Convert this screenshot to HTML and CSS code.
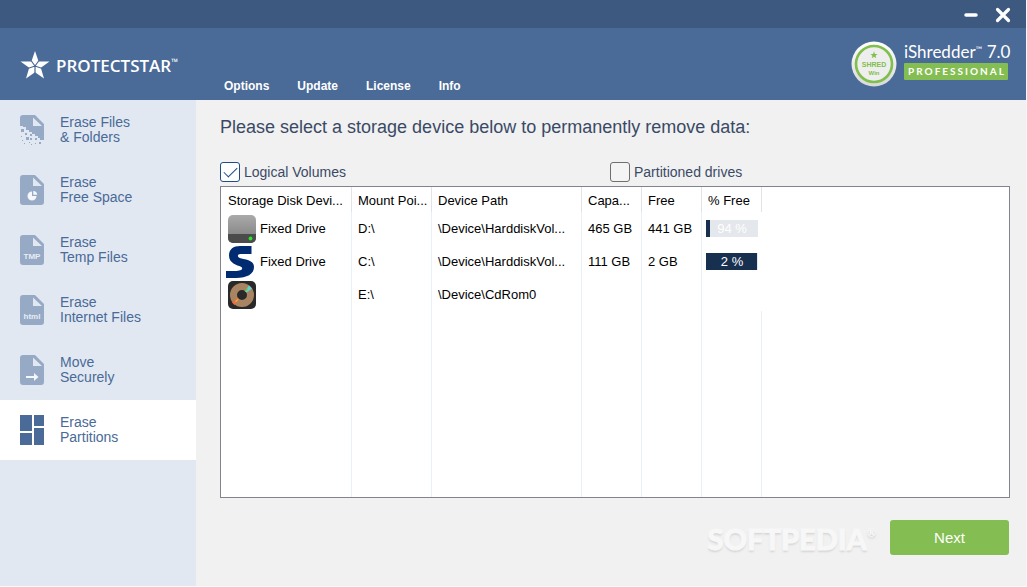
FILE: index.html
```
<!DOCTYPE html>
<html lang="en">
<head>
<meta charset="utf-8">
<title>iShredder 7.0 Professional</title>
<link rel="stylesheet" href="styles.css">
</head>
<body>
<svg class="defs" aria-hidden="true">
  <symbol id="file" viewBox="0 0 24 30">
    <path fill="#96a9c5" d="M3 0H15L24 9V27a3 3 0 0 1-3 3H3a3 3 0 0 1-3-3V3a3 3 0 0 1 3-3z"/>
    <path fill="#e1e8f2" d="M13 2.500V11H22z"/>
  </symbol>
</svg>
<div class="app">
  <div class="titlebar">
    <button class="win-btn" type="button" aria-label="Minimize"><svg width="16" height="16" viewBox="0 0 16 16"><path d="M3 8H13" stroke="#fff" stroke-width="3.500" stroke-linecap="round"/></svg></button>
    <button class="win-btn" type="button" aria-label="Close"><svg width="16" height="16" viewBox="0 0 16 16"><path d="M2.500 2.500L13.500 13.500M13.500 2.500L2.500 13.500" stroke="#fff" stroke-width="3.200" stroke-linecap="round"/></svg></button>
  </div>
  <header class="header">
    <div class="brand">
      <svg width="30" height="30" viewBox="0 0 30 30"><path fill="#fff" d="M15 1L18.600 11.400H29.500L20.800 17.800L24 28.500L15 22.200L6 28.500L9.200 17.800L.5 11.400H11.400z"/><path stroke="#4a6a97" stroke-width="1.200" d="M15 16L11 10.500M15 16L19 10.500M15 16L21.500 18.200M15 16V23M15 16L8.500 18.200"/></svg>
      <span class="brand-name">PROTECTSTAR<small>™</small></span>
    </div>
    <nav class="menu">
      <a href="#options">Options</a>
      <a href="#update">Update</a>
      <a href="#license">License</a>
      <a href="#info">Info</a>
    </nav>
    <div class="product">
      <svg width="46" height="46" viewBox="0 0 46 46">
        <defs><linearGradient id="badge" x1="0" y1="0" x2="0" y2="1"><stop offset="0" stop-color="#fff"/><stop offset="1" stop-color="#d8d8d8"/></linearGradient></defs>
        <circle cx="23" cy="23" r="22.500" fill="url(#badge)"/>
        <circle cx="23" cy="23" r="18" fill="#eee" stroke="#7fbf4b" stroke-width="2.600"/>
        <path fill="#7fbf4b" d="M23 10.300L23.900 13H26.600L24.500 14.700L25.300 17.300L23 15.700L20.700 17.300L21.500 14.700L19.400 13H22.100z"/>
        <text x="23" y="26" class="badge-main">SHRED</text>
        <text x="23" y="34" class="badge-sub">Win</text>
      </svg>
      <div class="product-text">
        <div class="product-name">iShredder<small>™</small> 7.0</div>
        <div class="edition">PROFESSIONAL</div>
      </div>
    </div>
  </header>
  <div class="body">
    <nav class="sidebar">
      <a class="side-item" href="#files">
        <svg width="24" height="30" viewBox="0 0 24 30"><path fill="#96a9c5" d="M3 0H15L24 9V25H20V23H18V21H15V19H12V17H9V15H6V12H3V11H0V3a3 3 0 0 1 3-3z"/><path fill="#e1e8f2" d="M13 2.500V11H22z"/><path fill="#96a9c5" d="M1 14h3v3H1zM6 13h2v2H6zM5 18h2v2H5zM10 19h2v2h-2zM6 22h3v3H6zM10 23h2v2h-2zM15 23h2v2h-2zM1 21h1v1H1zM2 25h1v1H2zM4 28h1v1H4zM9 27h1v1H9zM11 29h1v1h-1zM15 28h1v1h-1zM19 27h2v2h-2z"/></svg>
        <span>Erase Files<br>&amp; Folders</span>
      </a>
      <a class="side-item" href="#free">
        <svg width="24" height="30" viewBox="0 0 24 30"><use href="#file"/><path fill="#f4f7fb" d="M12 16.500V21H16.500A4.500 4.500 0 1 1 12 16.500zM13.300 15.800A4.400 4.400 0 0 1 17.200 19.700H13.300z"/></svg>
        <span>Erase<br>Free Space</span>
      </a>
      <a class="side-item" href="#temp">
        <svg width="24" height="30" viewBox="0 0 24 30"><use href="#file"/><text x="12" y="24" class="file-tag">TMP</text></svg>
        <span>Erase<br>Temp Files</span>
      </a>
      <a class="side-item" href="#internet">
        <svg width="24" height="30" viewBox="0 0 24 30"><use href="#file"/><text x="12" y="24" class="file-tag">html</text></svg>
        <span>Erase<br>Internet Files</span>
      </a>
      <a class="side-item" href="#move">
        <svg width="24" height="30" viewBox="0 0 24 30"><use href="#file"/><path fill="#f4f7fb" d="M6 21H14V18L18.500 22L14 26V23H6z"/></svg>
        <span>Move<br>Securely</span>
      </a>
      <a class="side-item active" href="#partitions" aria-current="page">
        <svg width="24" height="30" viewBox="0 0 24 30"><path fill="#4a6a97" d="M0 0H12V16H0zM14 0H24V11H14zM0 18H12V30H0zM14 13H24V30H14z"/></svg>
        <span>Erase<br>Partitions</span>
      </a>
    </nav>
    <main class="content">
      <h1>Please select a storage device below to permanently remove data:</h1>
      <div class="filters">
        <label><input type="checkbox" checked>Logical Volumes</label>
        <label><input type="checkbox">Partitioned drives</label>
      </div>
      <div class="list">
        <table>
          <colgroup><col class="c-disk"><col class="c-mount"><col class="c-path"><col class="c-size"><col class="c-size"><col class="c-size"></colgroup>
          <thead><tr><th>Storage Disk Devi...</th><th>Mount Poi...</th><th>Device Path</th><th>Capa...</th><th>Free</th><th>% Free</th></tr></thead>
          <tbody>
            <tr>
              <td class="disk"><div><svg width="28" height="28" viewBox="0 0 28 28"><defs><linearGradient id="hdd" x1="0" y1="0" x2="0" y2="1"><stop offset="0" stop-color="#aaa"/><stop offset="1" stop-color="#7c7c7c"/></linearGradient></defs><rect width="28" height="28" rx="5" fill="url(#hdd)"/><path fill="#4b4b4b" d="M0 19H28V23a5 5 0 0 1-5 5H5a5 5 0 0 1-5-5z"/><circle cx="22.500" cy="23.500" r="1.900" fill="#2be32b"/></svg>Fixed Drive</div></td>
              <td>D:\</td><td>\Device\HarddiskVol...</td><td>465 GB</td><td>441 GB</td>
              <td class="usage"><div class="bar"><i style="width:8%"></i><span>94 %</span></div></td>
            </tr>
            <tr>
              <td class="disk wide"><div><svg width="30" height="32" viewBox="0 0 30 32"><path fill="#002b70" d="M25.500 0V8H14.500C11 8 11 11.500 14.500 12.300C23 14 28 15.500 28 21C28 28 21 32 10 32H0V25H9C15 25 18 23 15 20.800C11 19 3 17.500 3 9.500C3 3 7.500 0 14 0z"/></svg>Fixed Drive</div></td>
              <td>C:\</td><td>\Device\HarddiskVol...</td><td>111 GB</td><td>2 GB</td>
              <td class="usage"><div class="bar"><i style="width:98%"></i><span>2 %</span></div></td>
            </tr>
            <tr>
              <td class="disk"><div><svg width="28" height="28" viewBox="0 0 28 28"><rect width="28" height="28" rx="5" fill="#292929"/><circle cx="14" cy="14" r="8.500" fill="none" stroke="#a98463" stroke-width="7"/><path fill="#62d5d1" d="M17 10L21 4.500L24 7.500L18.500 11.500z"/><path fill="#70bd5c" d="M16.500 10L19 7L20 8L17.500 11z"/><path fill="#ef6d3b" d="M4 21.500L9.500 17L11 18.500L6.500 24z"/><path fill="#eda63f" d="M7 20L10 17.500L10.800 18.300L8 21.500z"/></svg></div></td>
              <td>E:\</td><td>\Device\CdRom0</td><td></td><td></td><td class="usage"></td>
            </tr>
            <tr class="rest" aria-hidden="true"><td></td><td></td><td></td><td></td><td></td><td></td></tr>
          </tbody>
        </table>
      </div>
      <div class="actions">
        <span class="watermark">SOFTPEDIA<sup>®</sup></span>
        <button class="next" type="button">Next</button>
      </div>
    </main>
  </div>
</div>
</body>
</html>
```

FILE: styles.css
```
* { box-sizing: border-box; }
body { margin: 0; font-family: "Liberation Sans", Arial, sans-serif; font-size: 13px; color: #000; background: #f1f1f1; }
a { color: inherit; text-decoration: none; }
button { font-family: inherit; border: 0; cursor: pointer; }
.defs { position: absolute; width: 0; height: 0; }
.app { min-height: 100vh; display: flex; flex-direction: column; border-right: 1px solid #f8f8f8; border-bottom: 1px solid #fbfbfb; }

.titlebar { height: 28px; padding: 2px 15px 0; display: flex; justify-content: flex-end; align-items: center; gap: 16px; background: #3e597f; }
.win-btn { display: flex; padding: 0; background: none; }

.header { height: 72px; padding: 0 18px 0 20px; display: flex; background: #4a6a97; color: #fff; }
.brand { width: 204px; padding-top: 2px; display: flex; align-items: center; gap: 6px; }
.brand-name { padding-top: 2px; display: flex; align-items: flex-start; font-family: "Open Sans", sans-serif; font-weight: 600; font-size: 17px; line-height: 20px; }
.brand-name small { font-size: 9px; line-height: 12px; }
.menu { flex: 1; display: flex; align-items: flex-end; gap: 28px; padding-bottom: 7px; font-size: 12px; font-weight: bold; line-height: 14px; }
.product { display: flex; align-items: center; gap: 7px; padding-bottom: 1px; }
.product-text { width: 104px; padding-bottom: 6px; }
.product-name { font-family: Lato, sans-serif; font-size: 17px; line-height: 22px; white-space: nowrap; }
.product-name small { font-size: 9px; vertical-align: 5px; line-height: 0; }
.edition { height: 17px; padding-left: 2px; font-family: Lato, sans-serif; font-size: 10px; font-weight: bold; line-height: 17px; letter-spacing: 2px; text-align: center; background: #84bd52; border-radius: 1px; }
.badge-main { font: bold 7px "Liberation Sans", sans-serif; fill: #7fbf4b; text-anchor: middle; }
.badge-sub { font: bold 6px "Liberation Sans", sans-serif; fill: #7fbf4b; text-anchor: middle; }

.body { flex: 1; display: flex; }
.sidebar { width: 196px; flex: none; background: #e1e8f2; }
.side-item { height: 60px; padding-left: 20px; display: flex; align-items: center; gap: 16px; font-size: 14px; line-height: 15px; color: #4a6a97; }
.side-item.active { background: #fff; }
.file-tag { font: bold 8px "Liberation Sans", sans-serif; fill: #e8edf5; text-anchor: middle; }

.content { flex: 1; min-width: 0; padding: 16px 16px 31px 24px; display: flex; flex-direction: column; color: #3a4a66; }
h1 { margin: 0; font-size: 18px; font-weight: normal; line-height: 22px; }
.filters { margin-top: 24px; display: grid; grid-template-columns: 390px 1fr; font-size: 14px; line-height: 20px; }
.filters label { display: flex; align-items: center; gap: 4px; }
.filters input { appearance: none; width: 20px; height: 20px; margin: 0; border: 1px solid #6f6f6f; border-radius: 3px; background: #f4f4f4; display: grid; place-items: center; }
.filters input:checked { border-color: #1d4e89; background: #fff; }
.filters input:checked::before { content: ""; width: 12px; height: 6px; margin-bottom: 3px; border: solid #1d4e89; border-width: 0 0 1px 1px; transform: rotate(-45deg); }

.list { margin-top: 4px; flex: 1; display: flex; align-items: stretch; border: 1px solid #83838f; background: #fff; }
table { width: 541px; table-layout: fixed; border-collapse: separate; border-spacing: 0; color: #000; font-size: 13px; }
.c-disk { width: 131px; }
.c-mount { width: 80px; }
.c-path { width: 150px; }
.c-size { width: 60px; }
th, td { padding: 0 5px 0 6px; font-weight: normal; text-align: left; white-space: nowrap; border-right: 1px solid #eaf0f8; }
th { height: 25px; padding-top: 1px; border-color: #e3e3e3; }
th:first-child { padding-left: 7px; }
td { height: 33px; }
.disk { padding-left: 7px; }
.disk.wide { padding-left: 5px; }
.disk div { display: flex; align-items: center; gap: 4px; }
.usage { padding: 0 4px; border-right-color: #fff; }
.bar { position: relative; width: 52px; height: 17px; background: #e4e7eb; color: #fff; text-align: center; line-height: 17px; }
.bar i { position: absolute; left: 0; top: 0; bottom: 0; background: #18304f; }
.bar span { position: relative; }
.rest td { height: auto; }

.actions { margin-top: 22px; display: flex; justify-content: flex-end; align-items: center; gap: 14px; padding-right: 1px; }
.watermark { padding-top: 2px; font-family: Lato, sans-serif; font-weight: 900; font-size: 29px; line-height: 33px; color: #f7f7f7; -webkit-text-stroke: 1px #f7f7f7; text-shadow: 0 2px 2px #d4d4d4; }
.watermark sup { font-size: 11px; line-height: 0; vertical-align: 13px; -webkit-text-stroke: 0; }
.next { width: 119px; height: 35px; border-radius: 3px; background: #84bd52; color: #fff; font-size: 15px; }
```
